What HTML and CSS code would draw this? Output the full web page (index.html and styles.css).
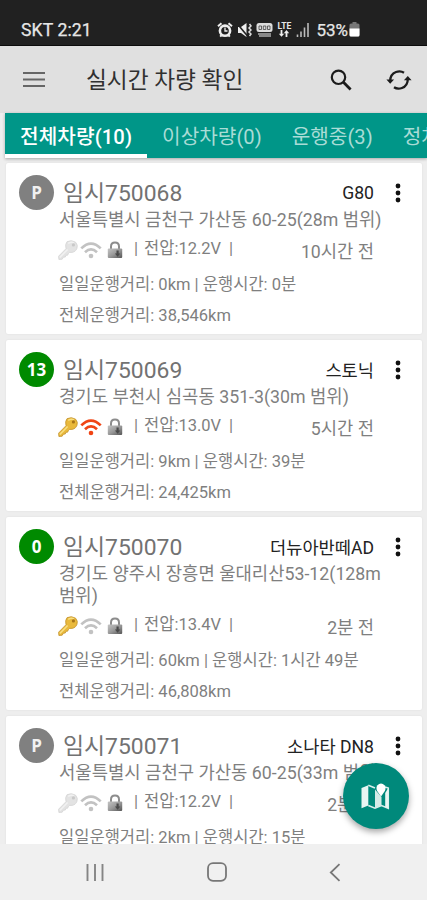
FILE: index.html
```html
<!DOCTYPE html>
<html lang="ko">
<head>
<meta charset="utf-8">
<meta name="viewport" content="width=device-width, initial-scale=1">
<title>실시간 차량 확인</title>
<link rel="stylesheet" href="styles.css">
</head>
<body>
<svg class="defs" aria-hidden="true">
  <defs>
    <linearGradient id="steel" x1="0" y1="0" x2="1" y2="1"><stop offset="0" stop-color="#c4c4c4"/><stop offset=".5" stop-color="#999"/><stop offset="1" stop-color="#555"/></linearGradient>
    <symbol id="key" viewBox="0 0 20 20">
      <path class="key-body" d="M9 1.7 Q13.6-.6 17.6 2.2 Q20.4 5 18.8 8.8 Q16.8 13 11.6 12.4 L10.4 13.6 L9.6 15.2 L7.8 15.3 L7.3 17 L5.4 17.2 L4.2 19.2 L.9 19.5 L.6 16.2 L8 8.7 Q6.9 4.2 9 1.7Z"/>
      <path class="key-shine" d="M1.8 17.4 L9.6 9.4 M10.2 3.4 Q13 1.4 16 2.8"/>
      <circle class="key-hole" cx="15.4" cy="4.9" r="1.6"/>
    </symbol>
    <symbol id="wifi" viewBox="0 0 22 17">
      <path d="M1.3 6.4 Q11-3.2 20.7 6.4 M5 10.2 Q11 4.6 17 10.2" fill="none" stroke="currentColor" stroke-width="2.7"/>
      <circle cx="11" cy="14" r="2.3" fill="currentColor"/>
    </symbol>
    <symbol id="lock" viewBox="0 0 16 18">
      <path d="M4 9 V5.5 Q4 1.5 8 1.5 Q12 1.5 12 5.5 V9" fill="none" stroke="#8c8c8c" stroke-width="2"/>
      <rect x=".8" y="7.6" width="14.4" height="9.4" rx="1" fill="url(#steel)"/>
      <path d="M9.5 9.5 h2.2 v3 h1.6 l-2.7 3.3 -2.7-3.3 h1.6z" fill="#4a4a4a"/>
    </symbol>
    <symbol id="more" viewBox="0 0 6 20"><circle cx="3" cy="3" r="2.4"/><circle cx="3" cy="10" r="2.4"/><circle cx="3" cy="17" r="2.4"/></symbol>
  </defs>
</svg>
<div class="phone">
  <div class="statusbar">
    <span class="carrier">SKT 2:21</span>
    <div class="indicators">
      <svg width="16" height="16" viewBox="0 0 16 16"><circle cx="8" cy="8.7" r="5.1" fill="none" stroke="#eee" stroke-width="2.6"/><path d="M1 4.2 L4.5 1.2 M15 4.2 L11.5 1.2 M3.2 14.6 L4.6 13 M12.8 14.6 L11.4 13" stroke="#eee" stroke-width="2"/><path d="M8 5.5 V9 H10.5" fill="none" stroke="#eee" stroke-width="1.3"/></svg>
      <svg width="15" height="16" viewBox="0 0 15 16"><path d="M1 5 H4 L9.5 1 V15 L4 11 H1Z" fill="#eee"/><path d="M0 1.5 L10.5 14" stroke="#212121" stroke-width="1.6"/><path d="M12.5 2 l1.5 2 -2 2 2 2 -2 2 2 2 -1.5 2" fill="none" stroke="#ddd" stroke-width="1.5"/></svg>
      <svg width="17" height="16" viewBox="0 0 17 16"><rect x=".5" y="1" width="16" height="9" rx="2.5" fill="#ddd"/><path d="M3 4 h2.5 v3.5 h-2.5z M7.3 4 h2.5 v3.5 h-2.5z M11.5 4 h2.5 v3.5 h-2.5z" fill="none" stroke="#444" stroke-width=".8"/><path d="M2 12 h13 M3 14 h12" stroke="#aaa" stroke-width="1.4"/></svg>
      <div class="lte"><span>LTE</span><svg width="12" height="7" viewBox="0 0 12 7"><path d="M3.5 0 V5 M8.5 7 V2" stroke="#eee" stroke-width="1.8"/><path d="M.8 3.7 H6.2 L3.5 6.8Z M5.8 3.2 H11.2 L8.5 .1Z" fill="#eee"/></svg></div>
      <svg width="14" height="16" viewBox="0 0 14 16"><path d="M1.5 12.5 V15 M5 9.5 V15 M8.5 5.5 V15 M12 1 V15" stroke="#bbb" stroke-width="1.6"/></svg>
      <span class="percent">53%</span>
      <svg width="11" height="15" viewBox="0 0 11 15"><path d="M3.5 0 H7.5 V2 H3.5Z" fill="#777"/><rect x=".5" y="1.5" width="10" height="13" rx="1.5" fill="#777"/><path d="M.5 6.5 H10.5 V13 Q10.5 14.5 9 14.5 H2 Q.5 14.5 .5 13Z" fill="#fff"/></svg>
    </div>
  </div>
  <header class="appbar">
    <svg width="22" height="17" viewBox="0 0 22 17"><path d="M0 2 H22 M0 8.5 H22 M0 15 H22" stroke="#666" stroke-width="2"/></svg>
    <h1>실시간 차량 확인</h1>
    <svg class="search" width="22" height="22" viewBox="0 0 22 22"><circle cx="8.5" cy="8.3" r="6.7" fill="none" stroke="#1c1c1c" stroke-width="2.2"/><path d="M13.2 13 L20.6 20.4" stroke="#1c1c1c" stroke-width="2.8"/></svg>
    <svg width="26" height="22" viewBox="0 0 26 22"><path d="M4.2 12 Q4.2 5.2 10 3 Q14.5 1.4 18 3.7 M21.8 10 Q21.8 16.8 16 19 Q11.5 20.6 8 18.3" fill="none" stroke="#1c1c1c" stroke-width="2.3"/><path d="M.4 10.6 H8.1 L4.2 14.8Z M17.9 11.2 H25.6 L21.8 7Z" fill="#1c1c1c"/></svg>
  </header>
  <nav class="tabs">
    <span class="tab active">전체차량(10)</span>
    <span class="tab">이상차량(0)</span>
    <span class="tab">운행중(3)</span>
    <span class="tab">정차</span>
  </nav>
  <main class="list">
    <article class="card">
      <span class="badge parked">P</span>
      <div class="info">
        <div class="head"><h2>임시750068</h2><span class="model">G80</span></div>
        <p class="address">서울특별시 금천구 가산동 60-25(28m 범위)</p>
        <div class="state"><svg class="key off"><use href="#key"/></svg><svg class="wifi"><use href="#wifi"/></svg><svg class="lock"><use href="#lock"/></svg><span class="volt"><i>|</i><span>전압:12.2V</span><i>|</i></span><span class="ago">10시간 전</span></div>
        <p class="stat">일일운행거리: 0km | 운행시간: 0분</p>
        <p class="stat">전체운행거리: 38,546km</p>
      </div>
      <svg class="more"><use href="#more"/></svg>
    </article>
    <article class="card">
      <span class="badge">13</span>
      <div class="info">
        <div class="head"><h2>임시750069</h2><span class="model">스토닉</span></div>
        <p class="address">경기도 부천시 심곡동 351-3(30m 범위)</p>
        <div class="state"><svg class="key"><use href="#key"/></svg><svg class="wifi on"><use href="#wifi"/></svg><svg class="lock"><use href="#lock"/></svg><span class="volt"><i>|</i><span>전압:13.0V</span><i>|</i></span><span class="ago">5시간 전</span></div>
        <p class="stat">일일운행거리: 9km | 운행시간: 39분</p>
        <p class="stat">전체운행거리: 24,425km</p>
      </div>
      <svg class="more"><use href="#more"/></svg>
    </article>
    <article class="card">
      <span class="badge">0</span>
      <div class="info">
        <div class="head"><h2>임시750070</h2><span class="model">더뉴아반떼AD</span></div>
        <p class="address">경기도 양주시 장흥면 울대리산53-12(128m<br>범위)</p>
        <div class="state"><svg class="key"><use href="#key"/></svg><svg class="wifi"><use href="#wifi"/></svg><svg class="lock"><use href="#lock"/></svg><span class="volt"><i>|</i><span>전압:13.4V</span><i>|</i></span><span class="ago">2분 전</span></div>
        <p class="stat">일일운행거리: 60km | 운행시간: 1시간 49분</p>
        <p class="stat">전체운행거리: 46,808km</p>
      </div>
      <svg class="more"><use href="#more"/></svg>
    </article>
    <article class="card">
      <span class="badge parked">P</span>
      <div class="info">
        <div class="head"><h2>임시750071</h2><span class="model">소나타 DN8</span></div>
        <p class="address">서울특별시 금천구 가산동 60-25(33m 범위)</p>
        <div class="state"><svg class="key off"><use href="#key"/></svg><svg class="wifi"><use href="#wifi"/></svg><svg class="lock"><use href="#lock"/></svg><span class="volt"><i>|</i><span>전압:12.2V</span><i>|</i></span><span class="ago">2분 전</span></div>
        <p class="stat">일일운행거리: 2km | 운행시간: 15분</p>
      </div>
      <svg class="more"><use href="#more"/></svg>
    </article>
  </main>
  <div class="fab">
    <svg width="30" height="27" viewBox="0 0 30 27"><path d="M1.5 5 L8.3 2.2 V22.5 L1.5 25.3Z" fill="#e9f5f3"/><path d="M8.3 2.2 L15 5 M8.3 22.5 L15 25.3 L21.5 22.5 L28.3 25.3 V5 L25 4" fill="none" stroke="#d9efec" stroke-width="1.5"/><path d="M15 6.5 L21.5 14 V22.5 L15 25.3Z" fill="#d5ebe8"/><path d="M25.2 10 L28.3 5 V25.3 L25.2 24Z" fill="#e9f5f3"/><path d="M21 13.5 L17.2 8 Q15.6 4.5 17.5 2.2 Q19 .5 21 .5 Q23 .5 24.5 2.2 Q26.4 4.5 24.8 8Z" fill="#fff"/></svg>
  </div>
  <footer class="navbar">
    <svg width="18" height="19" viewBox="0 0 18 19"><path d="M1.5 1 V18 M9 1 V18 M16.5 1 V18" stroke="#858585" stroke-width="1.9"/></svg>
    <svg width="20" height="20" viewBox="0 0 20 20"><rect x="1" y="1.2" width="18" height="17.6" rx="5" fill="none" stroke="#777" stroke-width="1.8"/></svg>
    <svg width="12" height="19" viewBox="0 0 12 19"><path d="M10.5 1.2 L1.8 9.5 L10.5 17.8" fill="none" stroke="#777" stroke-width="1.8"/></svg>
  </footer>
</div>
</body>
</html>
```
FILE: styles.css
```css
* { box-sizing: border-box; margin: 0; padding: 0; }
body { font-family: Roboto, "Noto Sans CJK KR", sans-serif; background: #eee; overflow: hidden; }
.defs { position: absolute; width: 0; height: 0; }
svg { display: block; flex: none; }
.phone { position: relative; width: 427px; height: 900px; display: flex; flex-direction: column; overflow: hidden; }

.statusbar { flex: none; height: 46px; padding: 14px 67px 0 21px; display: flex; justify-content: space-between; align-items: center; background: #212121; border-bottom: 1px solid #0c0c0c; color: #e6e6e6; font-size: 17.6px; line-height: 20px; }
.carrier { letter-spacing: .1px; -webkit-text-stroke: .25px #e6e6e6; }
.indicators { display: flex; align-items: center; gap: 4px; }
.percent { font-size: 17px; margin: 0 -3px 0 2px; -webkit-text-stroke: .25px #e6e6e6; }
.lte { display: flex; flex-direction: column; align-items: center; width: 16px; margin-left: -1px; }
.lte span { font-size: 8.5px; font-weight: 700; line-height: 8px; }

.appbar { flex: none; height: 67px; padding: 0 15px 0 23px; display: flex; align-items: center; background: #e0e0e0; }
.appbar h1 { margin-left: 41px; padding-top: 2px; font-size: 22.7px; font-weight: 400; line-height: 30px; color: #303030; white-space: nowrap; }
.search { margin: 0 34px 0 auto; }

.tabs { flex: none; height: 45px; margin-left: 5px; display: flex; background: #009688; overflow: hidden; box-shadow: 0 1px 3px rgba(0,0,0,.3); }
.tab { flex: none; padding: 0 15px; height: 45px; font-size: 20.2px; line-height: 48px; color: #a9dcd6; white-space: nowrap; }
.tab.active { color: #fff; font-weight: 500; letter-spacing: .1px; border-bottom: 4px solid #fff; }

.list { flex: none; height: 686px; padding: 5px 5px 0 6px; display: flex; flex-direction: column; gap: 6px; overflow: hidden; }
.card { flex: none; display: flex; align-items: flex-start; padding: 12px 21px 3px 13px; background: #fff; border-radius: 2px; box-shadow: 0 0 2px rgba(0,0,0,.08); color: #7f7f7f; }
.badge { flex: none; width: 35px; height: 35px; border-radius: 50%; background: #008a00; color: #fff; text-align: center; font: 700 17px/36px "Open Sans", sans-serif; }
.badge.parked { background: #808080; color: #f1f1f1; }
.info { width: 325px; margin-left: 5px; white-space: nowrap; }
.head { display: flex; height: 34px; padding: 0 8px 3px 4px; justify-content: space-between; align-items: center; }
.head h2 { font-size: 22.9px; font-weight: 400; color: #727272; }
.model { font-size: 17.6px; color: #222; padding-top: 4px; }
.address { font-size: 17.75px; line-height: 22px; }
.state { height: 38px; padding-right: 8px; display: flex; align-items: center; font-size: 16.5px; }
.volt { display: flex; gap: 6px; margin-left: 11px; line-height: 20px; padding-bottom: 3px; }
.volt i { font-style: normal; }
.volt i:last-child { margin-left: 2px; }
.ago { margin-left: auto; font-size: 17.7px; }
.stat { font-size: 16.55px; line-height: 31px; }
.more { width: 6px; height: 20px; margin: 8px 0 0 13px; fill: #111; }
.key { width: 20px; height: 20px; margin-left: -1px; }
.key-body { fill: #e9b93c; stroke: #c2912a; stroke-width: .8px; }
.key-shine { fill: none; stroke: #f8df83; stroke-width: 1.5px; }
.key-hole { fill: #a77419; }
.key.off { filter: grayscale(1); opacity: .4; }
.wifi { width: 22px; height: 17px; margin-left: 2px; color: #c2c2c2; }
.wifi.on { color: #f04414; }
.lock { width: 16px; height: 18px; margin-left: 5px; }

.fab { position: absolute; left: 343px; top: 763px; width: 66px; height: 66px; border-radius: 50%; background: #00897b; display: flex; align-items: center; justify-content: center; box-shadow: 0 3px 6px rgba(0,0,0,.35); }
.fab svg { margin-left: -2px; }
.navbar { flex: none; height: 56px; padding: 0 86px; display: flex; justify-content: space-between; align-items: center; background: #f0f0f0; }
```
